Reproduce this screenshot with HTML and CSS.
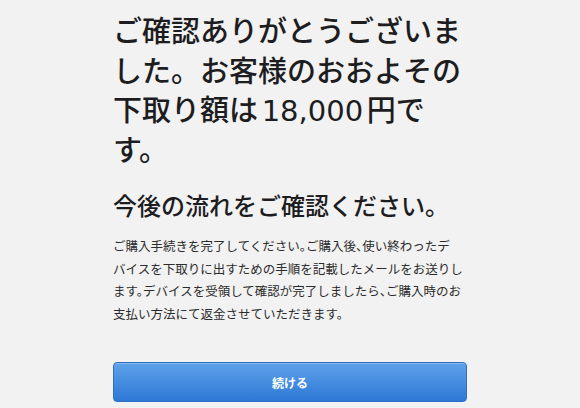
FILE: index.html
```html
<!DOCTYPE html>
<html lang="ja">
<head>
<meta charset="utf-8">
<link rel="stylesheet" href="styles.css">
</head>
<body>
<main class="page">
  <h1 class="title">ご確認ありがとうございました。お客様のおおよその下取り額は18,000円です。</h1>
  <h2 class="subtitle">今後の流れをご確認ください。</h2>
  <p class="body">ご購入手続きを完了してください。ご購入後、使い終わったデ<br>バイスを下取りに出すための手順を記載したメールをお送りします。デバイスを受領して確認が完了しましたら、ご購入時のお支払い方法にて返金させていただきます。</p>
  <button class="btn" type="button">続ける</button>
</main>
</body>
</html>
```

FILE: styles.css
```css
html, body {
  margin: 0;
  padding: 0;
  background: #f2f2f2;
}
body {
  font-family: "Noto Sans CJK JP", "Noto Sans", sans-serif;
  color: #1d1d1f;
}
.page {
  width: 354px;
  margin: 0 auto;
  padding-top: 13px;
  display: flex;
  flex-direction: column;
}
.title {
  margin: 0;
  font-family: "DejaVu Sans", "Noto Sans CJK JP", sans-serif;
  font-size: 29px;
  line-height: 39.5px;
  font-weight: 500;
  text-autospace: normal;
}
.subtitle {
  margin: 18px 0 0;
  font-size: 24px;
  line-height: 32px;
  font-weight: 500;
}
.body {
  margin: 14px 0 0;
  font-size: 12.5px;
  line-height: 22.5px;
  font-weight: 400;
  color: #2b2b2b;
  font-feature-settings: "halt";
}
.btn {
  margin-top: 37px;
  height: 40px;
  width: 100%;
  border: 1px solid #2f6fc4;
  border-radius: 4px;
  background: linear-gradient(#5ea2ea, #2d78d5);
  color: #fff;
  font-family: inherit;
  font-size: 12px;
  font-weight: 700;
  box-shadow: inset 0 1px 0 rgba(255,255,255,0.25);
}
```
